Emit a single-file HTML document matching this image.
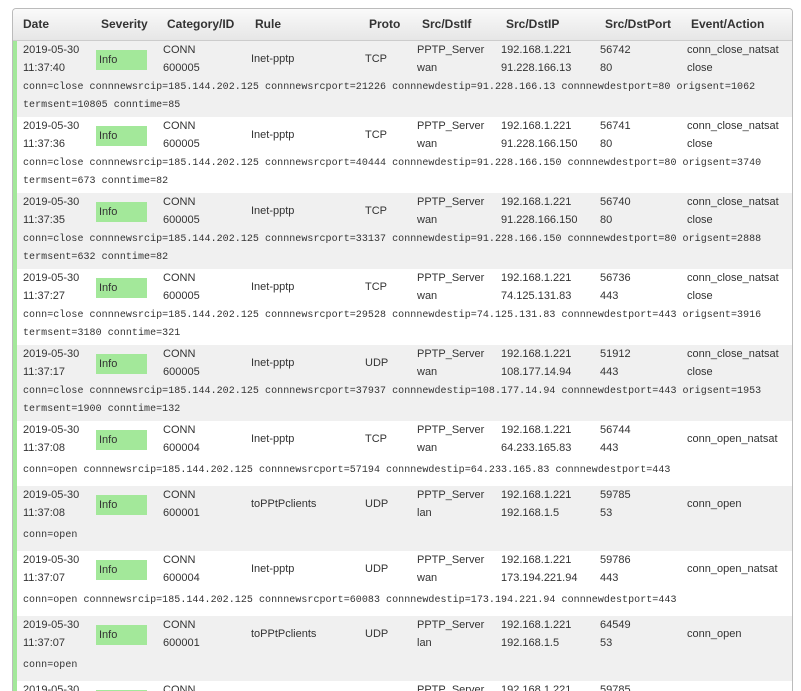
<!DOCTYPE html>
<html><head><meta charset="utf-8"><style>
*{margin:0;padding:0;box-sizing:border-box}
html,body{width:801px;height:691px;overflow:hidden}
body{background:#fff;font-family:"Liberation Sans",Arial,sans-serif;font-size:11px;color:#333;position:relative}
#box{position:absolute;left:12px;top:8px;width:781px;height:683px;border:1px solid #bbb;border-bottom:none;border-radius:4px 4px 0 0;overflow:hidden}
#hd{position:absolute;left:0;top:0;width:100%;height:32px;background:linear-gradient(#fafafa,#e6e6e6);border-bottom:1px solid #ccc;font-weight:bold;font-size:12px;color:#333}
#hd span{position:absolute;top:8px}
.r{position:absolute;left:0;width:100%;border-left:4px solid #a3e89a}
.g{background:#f0f0f0}.w{background:#fff}
.r span{position:absolute;line-height:18px;white-space:nowrap}
.b{background:#a3e89a;width:51px;height:20px;line-height:20px!important;padding-left:3px}
.m{font-family:"Liberation Mono",monospace;font-size:10px;letter-spacing:0.05px}
</style></head><body>
<div id="box">
<div id="hd"><span style="left:10px">Date</span><span style="left:88px">Severity</span><span style="left:154px">Category/ID</span><span style="left:242px">Rule</span><span style="left:356px">Proto</span><span style="left:409px">Src/DstIf</span><span style="left:493px">Src/DstIP</span><span style="left:592px">Src/DstPort</span><span style="left:678px">Event/Action</span></div>

<div class="r g" style="top:32px;height:76px">
<span style="left:6px;top:0">2019-05-30<br>11:37:40</span><span class="b" style="left:79px;top:9px">Info</span><span style="left:146px;top:0">CONN<br>600005</span><span style="left:234px;top:9px">Inet-pptp</span><span style="left:348px;top:9px">TCP</span><span style="left:400px;top:0">PPTP_Server<br>wan</span><span style="left:484px;top:0">192.168.1.221<br>91.228.166.13</span><span style="left:583px;top:0">56742<br>80</span><span style="left:670px;top:0">conn_close_natsat<br>close</span>
<span class="m" style="left:6px;top:38px">conn=close connnewsrcip=185.144.202.125 connnewsrcport=21226 connnewdestip=91.228.166.13 connnewdestport=80 origsent=1062<br>termsent=10805 conntime=85</span></div>

<div class="r w" style="top:108px;height:76px">
<span style="left:6px;top:0">2019-05-30<br>11:37:36</span><span class="b" style="left:79px;top:9px">Info</span><span style="left:146px;top:0">CONN<br>600005</span><span style="left:234px;top:9px">Inet-pptp</span><span style="left:348px;top:9px">TCP</span><span style="left:400px;top:0">PPTP_Server<br>wan</span><span style="left:484px;top:0">192.168.1.221<br>91.228.166.150</span><span style="left:583px;top:0">56741<br>80</span><span style="left:670px;top:0">conn_close_natsat<br>close</span>
<span class="m" style="left:6px;top:38px">conn=close connnewsrcip=185.144.202.125 connnewsrcport=40444 connnewdestip=91.228.166.150 connnewdestport=80 origsent=3740<br>termsent=673 conntime=82</span></div>

<div class="r g" style="top:184px;height:76px">
<span style="left:6px;top:0">2019-05-30<br>11:37:35</span><span class="b" style="left:79px;top:9px">Info</span><span style="left:146px;top:0">CONN<br>600005</span><span style="left:234px;top:9px">Inet-pptp</span><span style="left:348px;top:9px">TCP</span><span style="left:400px;top:0">PPTP_Server<br>wan</span><span style="left:484px;top:0">192.168.1.221<br>91.228.166.150</span><span style="left:583px;top:0">56740<br>80</span><span style="left:670px;top:0">conn_close_natsat<br>close</span>
<span class="m" style="left:6px;top:38px">conn=close connnewsrcip=185.144.202.125 connnewsrcport=33137 connnewdestip=91.228.166.150 connnewdestport=80 origsent=2888<br>termsent=632 conntime=82</span></div>

<div class="r w" style="top:260px;height:76px">
<span style="left:6px;top:0">2019-05-30<br>11:37:27</span><span class="b" style="left:79px;top:9px">Info</span><span style="left:146px;top:0">CONN<br>600005</span><span style="left:234px;top:9px">Inet-pptp</span><span style="left:348px;top:9px">TCP</span><span style="left:400px;top:0">PPTP_Server<br>wan</span><span style="left:484px;top:0">192.168.1.221<br>74.125.131.83</span><span style="left:583px;top:0">56736<br>443</span><span style="left:670px;top:0">conn_close_natsat<br>close</span>
<span class="m" style="left:6px;top:38px">conn=close connnewsrcip=185.144.202.125 connnewsrcport=29528 connnewdestip=74.125.131.83 connnewdestport=443 origsent=3916<br>termsent=3180 conntime=321</span></div>

<div class="r g" style="top:336px;height:76px">
<span style="left:6px;top:0">2019-05-30<br>11:37:17</span><span class="b" style="left:79px;top:9px">Info</span><span style="left:146px;top:0">CONN<br>600005</span><span style="left:234px;top:9px">Inet-pptp</span><span style="left:348px;top:9px">UDP</span><span style="left:400px;top:0">PPTP_Server<br>wan</span><span style="left:484px;top:0">192.168.1.221<br>108.177.14.94</span><span style="left:583px;top:0">51912<br>443</span><span style="left:670px;top:0">conn_close_natsat<br>close</span>
<span class="m" style="left:6px;top:38px">conn=close connnewsrcip=185.144.202.125 connnewsrcport=37937 connnewdestip=108.177.14.94 connnewdestport=443 origsent=1953<br>termsent=1900 conntime=132</span></div>

<div class="r w" style="top:412px;height:65px">
<span style="left:6px;top:0">2019-05-30<br>11:37:08</span><span class="b" style="left:79px;top:9px">Info</span><span style="left:146px;top:0">CONN<br>600004</span><span style="left:234px;top:9px">Inet-pptp</span><span style="left:348px;top:9px">TCP</span><span style="left:400px;top:0">PPTP_Server<br>wan</span><span style="left:484px;top:0">192.168.1.221<br>64.233.165.83</span><span style="left:583px;top:0">56744<br>443</span><span style="left:670px;top:9px">conn_open_natsat</span>
<span class="m" style="left:6px;top:41px">conn=open connnewsrcip=185.144.202.125 connnewsrcport=57194 connnewdestip=64.233.165.83 connnewdestport=443</span></div>

<div class="r g" style="top:477px;height:65px">
<span style="left:6px;top:0">2019-05-30<br>11:37:08</span><span class="b" style="left:79px;top:9px">Info</span><span style="left:146px;top:0">CONN<br>600001</span><span style="left:234px;top:9px">toPPtPclients</span><span style="left:348px;top:9px">UDP</span><span style="left:400px;top:0">PPTP_Server<br>lan</span><span style="left:484px;top:0">192.168.1.221<br>192.168.1.5</span><span style="left:583px;top:0">59785<br>53</span><span style="left:670px;top:9px">conn_open</span>
<span class="m" style="left:6px;top:41px">conn=open</span></div>

<div class="r w" style="top:542px;height:65px">
<span style="left:6px;top:0">2019-05-30<br>11:37:07</span><span class="b" style="left:79px;top:9px">Info</span><span style="left:146px;top:0">CONN<br>600004</span><span style="left:234px;top:9px">Inet-pptp</span><span style="left:348px;top:9px">UDP</span><span style="left:400px;top:0">PPTP_Server<br>wan</span><span style="left:484px;top:0">192.168.1.221<br>173.194.221.94</span><span style="left:583px;top:0">59786<br>443</span><span style="left:670px;top:9px">conn_open_natsat</span>
<span class="m" style="left:6px;top:41px">conn=open connnewsrcip=185.144.202.125 connnewsrcport=60083 connnewdestip=173.194.221.94 connnewdestport=443</span></div>

<div class="r g" style="top:607px;height:65px">
<span style="left:6px;top:0">2019-05-30<br>11:37:07</span><span class="b" style="left:79px;top:9px">Info</span><span style="left:146px;top:0">CONN<br>600001</span><span style="left:234px;top:9px">toPPtPclients</span><span style="left:348px;top:9px">UDP</span><span style="left:400px;top:0">PPTP_Server<br>lan</span><span style="left:484px;top:0">192.168.1.221<br>192.168.1.5</span><span style="left:583px;top:0">64549<br>53</span><span style="left:670px;top:9px">conn_open</span>
<span class="m" style="left:6px;top:41px">conn=open</span></div>

<div class="r w" style="top:672px;height:11px;overflow:hidden">
<span style="left:6px;top:0">2019-05-30<br>11:37:07</span><span class="b" style="left:79px;top:9px">Info</span><span style="left:146px;top:0">CONN<br>600001</span><span style="left:400px;top:0">PPTP_Server<br>lan</span><span style="left:484px;top:0">192.168.1.221<br>192.168.1.5</span><span style="left:583px;top:0">59785<br>53</span></div>
</div>
</body></html>
